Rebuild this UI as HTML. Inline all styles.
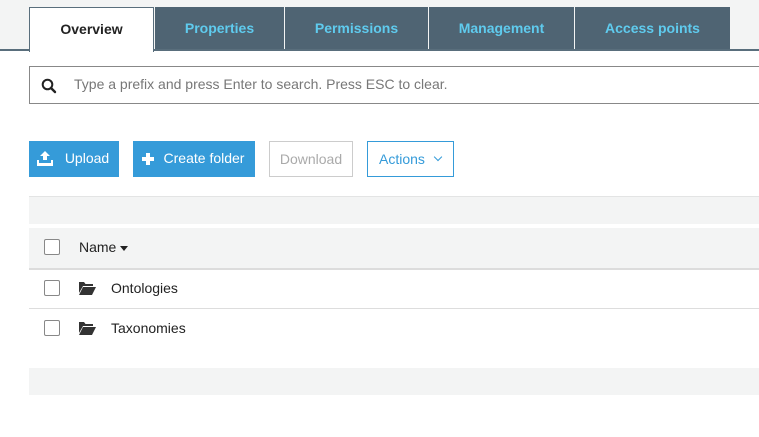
<!DOCTYPE html><html><head><style>
body{margin:0;width:759px;height:437px;background:#fff;font-family:"Liberation Sans",sans-serif;position:relative;overflow:hidden}
.a{position:absolute;box-sizing:border-box}
.tab{top:7px;height:42px;background:#4f6473;color:#5fcbee;font-weight:bold;font-size:14px;text-align:center;line-height:42px}
.btn{top:141px;height:36px;font-size:14px;line-height:35px;text-align:center}
.cb{width:16px;height:16px;border:1px solid #888;border-radius:2px;left:44px;background:#fff}
</style></head><body>
<div class="a" style="left:0;top:0;width:759px;height:50px;background:#f3f4f4"></div>
<div class="a" style="left:0;top:49px;width:759px;height:2px;background:#596e7c"></div>
<div class="a" style="left:29px;top:7px;width:125px;height:45px;background:#fff;border:1px solid #596e7c;border-bottom:none;text-align:center;line-height:42px;font-weight:bold;font-size:14px;color:#222">Overview</div>
<div class="a tab" style="left:155px;width:129px">Properties</div>
<div class="a tab" style="left:285px;width:143px">Permissions</div>
<div class="a tab" style="left:429px;width:145px">Management</div>
<div class="a tab" style="left:575px;width:155px">Access points</div>
<div class="a" style="left:29px;top:66px;width:740px;height:38px;border:1px solid #888"></div>
<svg class="a" style="left:41px;top:78px" width="16" height="16" viewBox="0 0 16 16"><circle cx="6.5" cy="6.5" r="4.8" fill="none" stroke="#222" stroke-width="2"/><path d="M10 10l4 4" stroke="#222" stroke-width="2.4" stroke-linecap="round"/></svg>
<div class="a" style="left:74px;top:76px;font-size:14px;color:#777">Type a prefix and press Enter to search. Press ESC to clear.</div>
<div class="a btn" style="left:29px;width:90px;background:#359bd9;color:#fff;padding-left:26px">Upload</div>
<svg class="a" style="left:37px;top:151px" width="16" height="15" viewBox="0 0 16 15"><path d="M8 0L3 5h3v5h4V5h3z" fill="#fff"/><rect x="0" y="9" width="16" height="6" fill="#fff"/><rect x="2" y="9" width="12" height="3" fill="#359bd9"/></svg>
<div class="a btn" style="left:133px;width:122px;background:#359bd9;color:#fff;padding-left:20px">Create folder</div>
<div class="a" style="left:142px;top:157px;width:12px;height:4px;background:#fff"></div>
<div class="a" style="left:146px;top:153px;width:4px;height:12px;background:#fff"></div>
<div class="a btn" style="left:269px;width:84px;border:1px solid #ccc;color:#aaa">Download</div>
<div class="a btn" style="left:367px;width:87px;border:1px solid #359bd9;color:#359bd9;text-align:left;padding-left:11px">Actions <span style="display:inline-block;width:5px;height:5px;border-right:1.5px solid #359bd9;border-bottom:1.5px solid #359bd9;transform:rotate(45deg);margin:0 0 4px 6px"></span></div>
<div class="a" style="left:29px;top:196px;width:730px;height:28px;background:#f3f4f4;border-top:1px solid #e3e4e4"></div>
<div class="a" style="left:29px;top:228px;width:730px;height:42px;background:#f3f4f4;border-bottom:2px solid #dcdcdc"></div>
<div class="a cb" style="top:239px"></div>
<div class="a" style="left:79px;top:239px;font-size:14px;color:#222">Name <span style="display:inline-block;border-left:4px solid transparent;border-right:4px solid transparent;border-top:5px solid #222;vertical-align:middle"></span></div>
<div class="a cb" style="top:280px"></div>
<svg class="a" style="left:79px;top:282px" width="17" height="13" viewBox="0 0 17 13"><path d="M0 0h5l1.5 2H14v2H4L0 11z M4 5h13l-4 8H0z" fill="#333"/></svg>
<div class="a" style="left:111px;top:280px;font-size:14px;color:#222">Ontologies</div>
<div class="a" style="left:29px;top:308px;width:730px;height:1px;background:#ddd"></div>
<div class="a cb" style="top:320px"></div>
<svg class="a" style="left:79px;top:322px" width="17" height="13" viewBox="0 0 17 13"><path d="M0 0h5l1.5 2H14v2H4L0 11z M4 5h13l-4 8H0z" fill="#333"/></svg>
<div class="a" style="left:111px;top:320px;font-size:14px;color:#222">Taxonomies</div>
<div class="a" style="left:29px;top:368px;width:730px;height:27px;background:#f3f4f4"></div>
</body></html>
